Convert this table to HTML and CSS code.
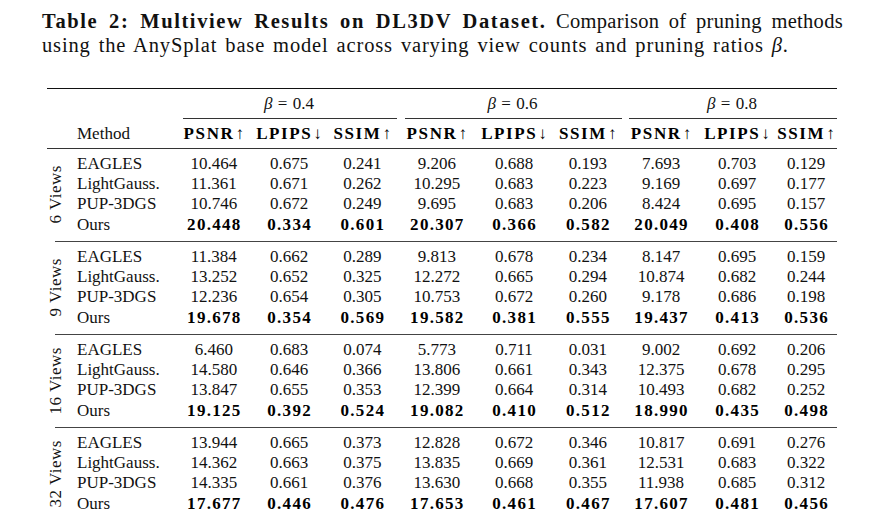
FILE: index.html
```html
<!DOCTYPE html>
<html>
<head>
<meta charset="utf-8">
<link rel="stylesheet" href="styles.css">
</head>
<body>
<div class="page">
  <p class="caption">
    <span class="cap-line1"><b class="cap-bold">Table 2: Multiview Results on DL3DV Dataset.</b> Comparison of pruning methods</span>
    <span class="cap-line2">using the AnySplat base model across varying view counts and pruning ratios <i>β</i>.</span>
  </p>

  <div class="table">
    <div class="toprule"></div>
    <div class="grid head-beta">
      <div class="blank"></div>
      <div class="beta"><span class="beta-text"><i>β</i> = 0.4</span><div class="cmid"></div></div>
      <div class="beta"><span class="beta-text"><i>β</i> = 0.6</span><div class="cmid"></div></div>
      <div class="beta last"><span class="beta-text"><i>β</i> = 0.8</span><div class="cmid"></div></div>
    </div>
    <div class="grid head-metrics">
      <div class="blank1"></div>
      <div class="method">Method</div>
      <div class="hm"><span class="hl">PSNR</span>↑</div>
      <div class="hm"><span class="hl">LPIPS</span>↓</div>
      <div class="hm"><span class="hl">SSIM</span>↑</div>
      <div class="hm"><span class="hl">PSNR</span>↑</div>
      <div class="hm"><span class="hl">LPIPS</span>↓</div>
      <div class="hm"><span class="hl">SSIM</span>↑</div>
      <div class="hm"><span class="hl">PSNR</span>↑</div>
      <div class="hm"><span class="hl">LPIPS</span>↓</div>
      <div class="hm"><span class="hl">SSIM</span>↑</div>
    </div>
    <div class="midrule"></div>

    <div class="grid group">
      <div class="glabel"><span>6 Views</span></div>
      <div class="method">EAGLES</div><div class="c">10.464</div><div class="c">0.675</div><div class="c">0.241</div><div class="c">9.206</div><div class="c">0.688</div><div class="c">0.193</div><div class="c">7.693</div><div class="c">0.703</div><div class="c">0.129</div>
      <div class="method">LightGauss.</div><div class="c">11.361</div><div class="c">0.671</div><div class="c">0.262</div><div class="c">10.295</div><div class="c">0.683</div><div class="c">0.223</div><div class="c">9.169</div><div class="c">0.697</div><div class="c">0.177</div>
      <div class="method">PUP-3DGS</div><div class="c">10.746</div><div class="c">0.672</div><div class="c">0.249</div><div class="c">9.695</div><div class="c">0.683</div><div class="c">0.206</div><div class="c">8.424</div><div class="c">0.695</div><div class="c">0.157</div>
      <div class="method">Ours</div><div class="c b">20.448</div><div class="c b">0.334</div><div class="c b">0.601</div><div class="c b">20.307</div><div class="c b">0.366</div><div class="c b">0.582</div><div class="c b">20.049</div><div class="c b">0.408</div><div class="c b">0.556</div>
    </div>
    <div class="sep"></div>

    <div class="grid group">
      <div class="glabel"><span>9 Views</span></div>
      <div class="method">EAGLES</div><div class="c">11.384</div><div class="c">0.662</div><div class="c">0.289</div><div class="c">9.813</div><div class="c">0.678</div><div class="c">0.234</div><div class="c">8.147</div><div class="c">0.695</div><div class="c">0.159</div>
      <div class="method">LightGauss.</div><div class="c">13.252</div><div class="c">0.652</div><div class="c">0.325</div><div class="c">12.272</div><div class="c">0.665</div><div class="c">0.294</div><div class="c">10.874</div><div class="c">0.682</div><div class="c">0.244</div>
      <div class="method">PUP-3DGS</div><div class="c">12.236</div><div class="c">0.654</div><div class="c">0.305</div><div class="c">10.753</div><div class="c">0.672</div><div class="c">0.260</div><div class="c">9.178</div><div class="c">0.686</div><div class="c">0.198</div>
      <div class="method">Ours</div><div class="c b">19.678</div><div class="c b">0.354</div><div class="c b">0.569</div><div class="c b">19.582</div><div class="c b">0.381</div><div class="c b">0.555</div><div class="c b">19.437</div><div class="c b">0.413</div><div class="c b">0.536</div>
    </div>
    <div class="sep"></div>

    <div class="grid group">
      <div class="glabel"><span>16 Views</span></div>
      <div class="method">EAGLES</div><div class="c">6.460</div><div class="c">0.683</div><div class="c">0.074</div><div class="c">5.773</div><div class="c">0.711</div><div class="c">0.031</div><div class="c">9.002</div><div class="c">0.692</div><div class="c">0.206</div>
      <div class="method">LightGauss.</div><div class="c">14.580</div><div class="c">0.646</div><div class="c">0.366</div><div class="c">13.806</div><div class="c">0.661</div><div class="c">0.343</div><div class="c">12.375</div><div class="c">0.678</div><div class="c">0.295</div>
      <div class="method">PUP-3DGS</div><div class="c">13.847</div><div class="c">0.655</div><div class="c">0.353</div><div class="c">12.399</div><div class="c">0.664</div><div class="c">0.314</div><div class="c">10.493</div><div class="c">0.682</div><div class="c">0.252</div>
      <div class="method">Ours</div><div class="c b">19.125</div><div class="c b">0.392</div><div class="c b">0.524</div><div class="c b">19.082</div><div class="c b">0.410</div><div class="c b">0.512</div><div class="c b">18.990</div><div class="c b">0.435</div><div class="c b">0.498</div>
    </div>
    <div class="sep"></div>

    <div class="grid group">
      <div class="glabel"><span>32 Views</span></div>
      <div class="method">EAGLES</div><div class="c">13.944</div><div class="c">0.665</div><div class="c">0.373</div><div class="c">12.828</div><div class="c">0.672</div><div class="c">0.346</div><div class="c">10.817</div><div class="c">0.691</div><div class="c">0.276</div>
      <div class="method">LightGauss.</div><div class="c">14.362</div><div class="c">0.663</div><div class="c">0.375</div><div class="c">13.835</div><div class="c">0.669</div><div class="c">0.361</div><div class="c">12.531</div><div class="c">0.683</div><div class="c">0.322</div>
      <div class="method">PUP-3DGS</div><div class="c">14.335</div><div class="c">0.661</div><div class="c">0.376</div><div class="c">13.630</div><div class="c">0.668</div><div class="c">0.355</div><div class="c">11.938</div><div class="c">0.685</div><div class="c">0.312</div>
      <div class="method">Ours</div><div class="c b">17.677</div><div class="c b">0.446</div><div class="c b">0.476</div><div class="c b">17.653</div><div class="c b">0.461</div><div class="c b">0.467</div><div class="c b">17.607</div><div class="c b">0.481</div><div class="c b">0.456</div>
    </div>
  </div>
</div>
</body>
</html>
```

FILE: styles.css
```css
html, body {
  margin: 0;
  padding: 0;
  background: #fff;
}

.page {
  font-family: "Liberation Serif", "Times New Roman", serif;
  color: #111;
  width: 877px;
  height: 525px;
  overflow: hidden;
}

.caption {
  margin: 9px 0 0 42px;
  width: 801px;
  font-size: 20.5px;
  line-height: 24px;
}

.cap-line1 {
  display: block;
  text-align: justify;
  text-align-last: justify;
  letter-spacing: 0.3px;
}

.cap-bold {
  letter-spacing: 1.6px;
}

.cap-line2 {
  display: block;
  letter-spacing: 0.85px;
  word-spacing: 2px;
}

.table {
  margin: 31px 0 0 47px;
  width: 790px;
  font-size: 17px;
}

.toprule {
  height: 1px;
  background: #111;
}

.grid {
  display: grid;
  grid-template-columns: 17px 112px 75.5px 75px 71.5px 77.5px 77px 70.5px 76px 76px 62px;
}

.head-beta .blank {
  grid-column: 1 / span 2;
}

.beta {
  grid-column: span 3;
  display: flex;
  flex-direction: column;
}

.beta-text {
  height: 29px;
  line-height: 29px;
  text-align: center;
  word-spacing: 1px;
  padding-left: 4px;
}

.cmid {
  height: 1px;
  background: #333;
  margin: 0 1px 0 7px;
}

.beta.last .cmid {
  margin: 0 0 0 6px;
}

.head-metrics {
  height: 29px;
  line-height: 29px;
}

.hm {
  text-align: center;
  font-weight: bold;
  color: #000;
  white-space: nowrap;
}

.hl {
  letter-spacing: 1.6px;
  margin-right: 1px;
}

.midrule {
  height: 1px;
  background: #333;
}

.sep {
  height: 1px;
  background: #444;
  margin-left: 8px;
}

.group {
  grid-auto-rows: 20.4px;
  line-height: 20.4px;
  padding: 4.5px 0 6px;
}

.glabel {
  grid-column: 1;
  grid-row: 1 / span 4;
  display: flex;
  align-items: center;
  justify-content: center;
}

.glabel span {
  writing-mode: vertical-rl;
  transform: rotate(180deg);
  line-height: 17px;
  white-space: nowrap;
  letter-spacing: 0.5px;
}

.method {
  padding-left: 13px;
  white-space: nowrap;
}

.c {
  text-align: center;
  white-space: nowrap;
}

.c.b {
  font-weight: bold;
  color: #000;
  letter-spacing: 1.3px;
  padding-left: 1.3px;
}
```
